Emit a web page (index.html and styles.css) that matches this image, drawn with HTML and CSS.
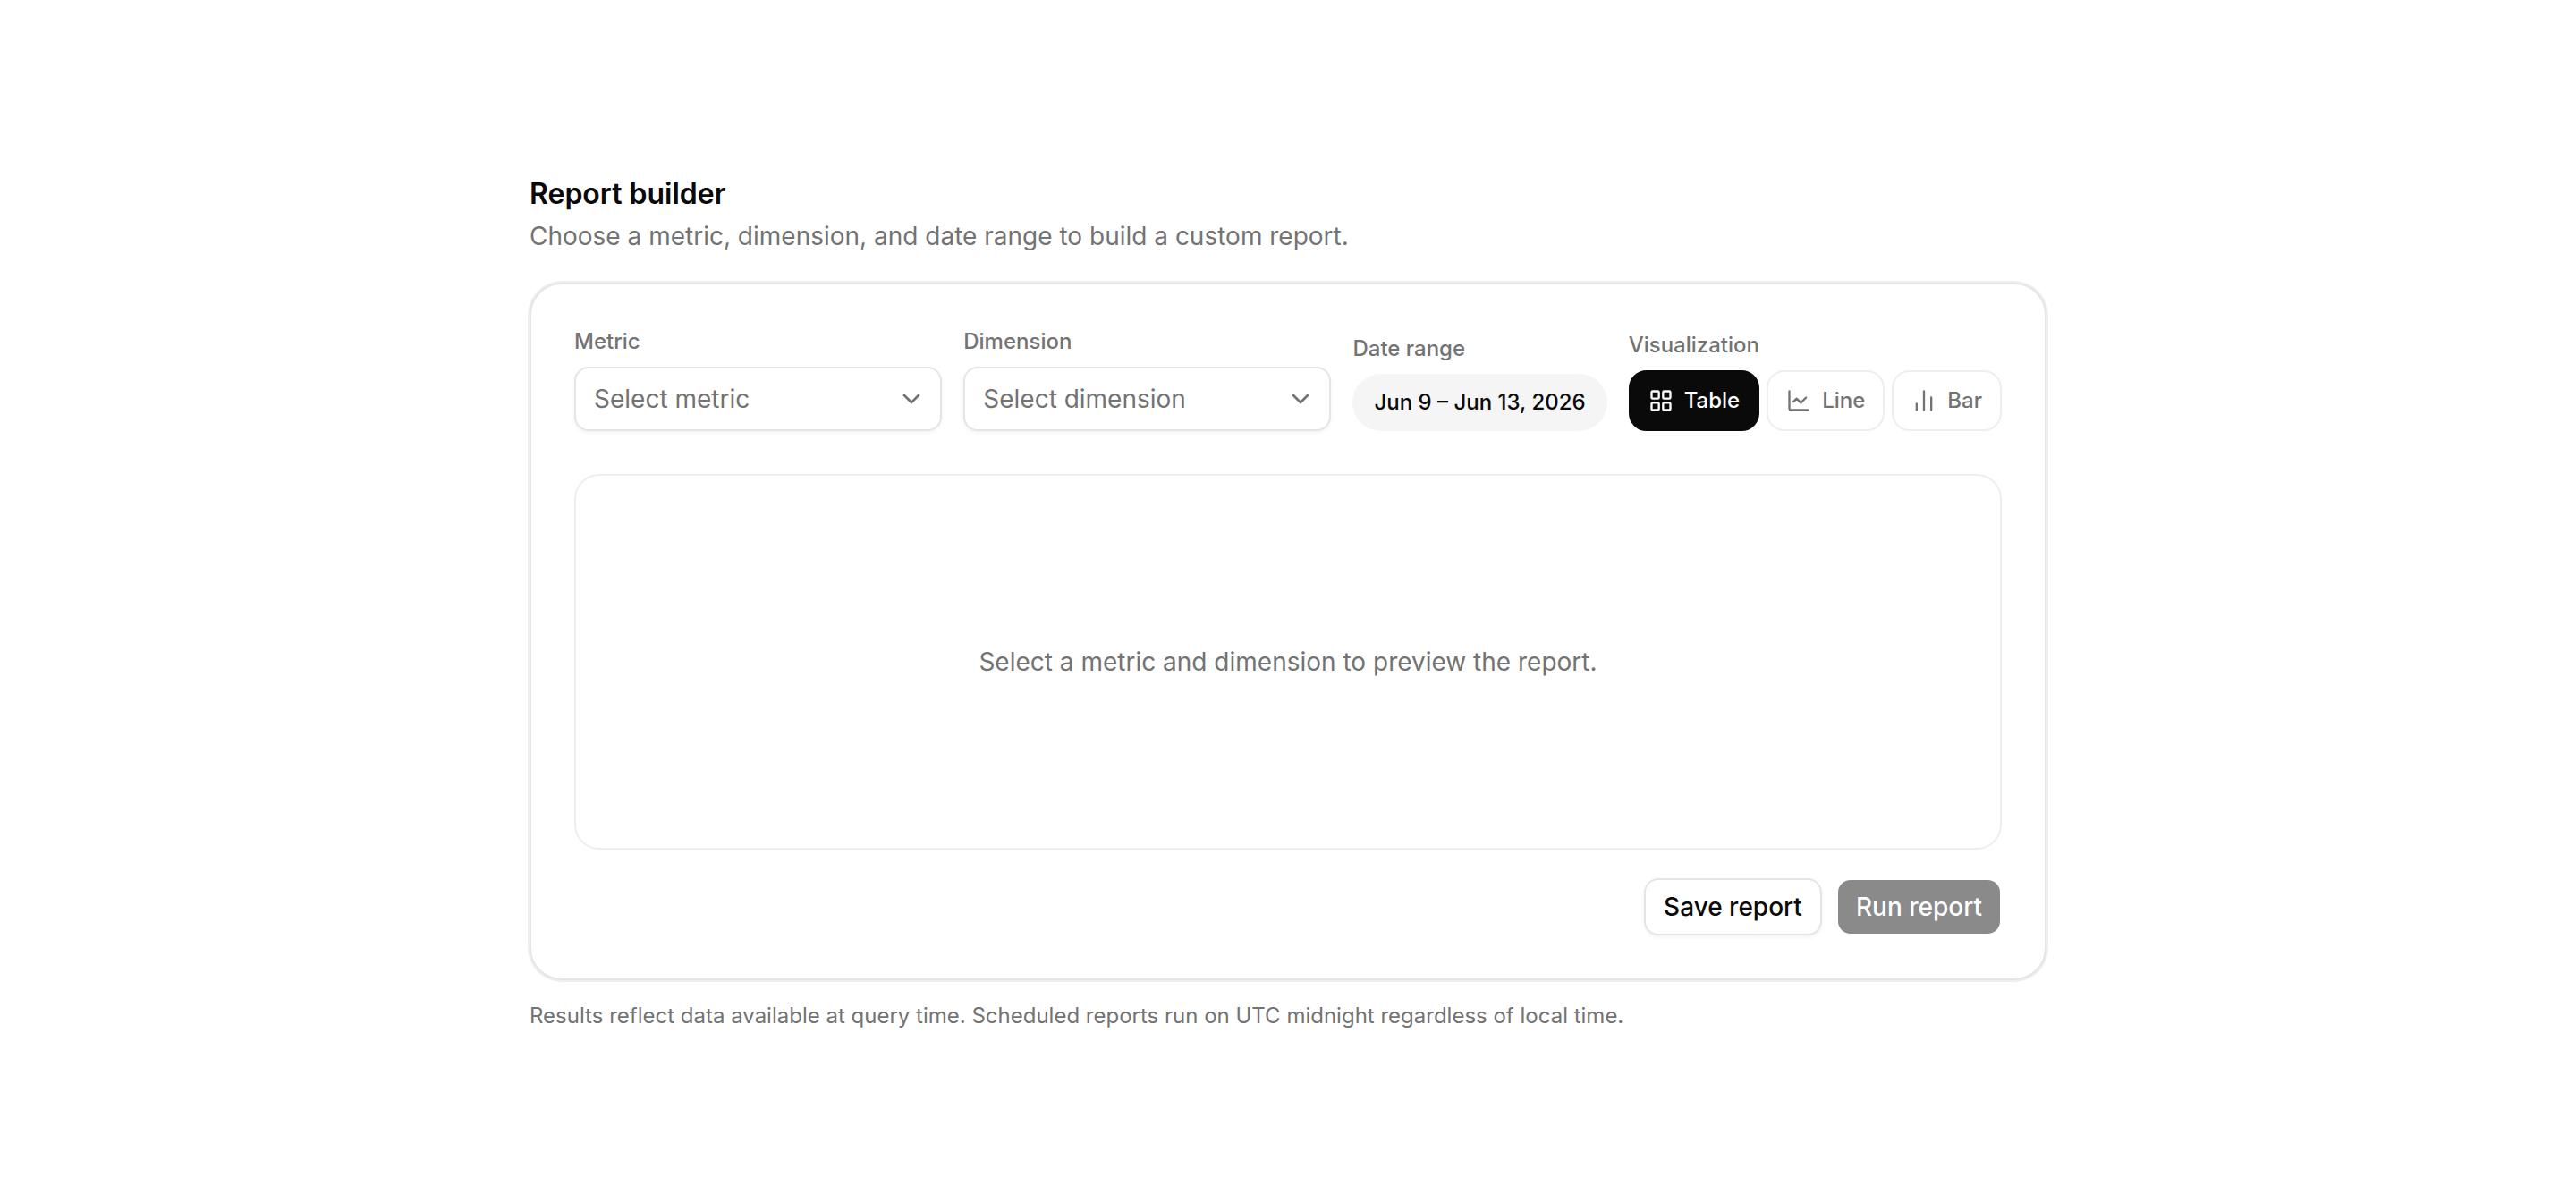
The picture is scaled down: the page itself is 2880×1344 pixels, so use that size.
FILE: index.html
```html
<!DOCTYPE html>
<html lang="en">

<head>
    <meta charset="UTF-8">
    <meta name="viewport" content="width=device-width, initial-scale=1.0">
    <title>Report builder</title>
    <link rel="stylesheet" href="styles.css">
</head>

<body>
    <main class="page">
        <header class="header">
            <h1 class="title">Report builder</h1>
            <p class="subtitle">Choose a metric, dimension, and date range to build a custom report.</p>
        </header>

        <form class="card">
            <div class="filters">
                <div class="field field-grow">
                    <label class="label" for="metric">Metric</label>
                    <div class="select-wrap">
                        <select class="select" id="metric">
                            <option value="">Select metric</option>
                        </select>
                        <svg class="chevron" viewBox="0 0 24 24" aria-hidden="true"><path d="m6 9 6 6 6-6"/></svg>
                    </div>
                </div>
                <div class="field field-grow">
                    <label class="label" for="dimension">Dimension</label>
                    <div class="select-wrap">
                        <select class="select" id="dimension">
                            <option value="">Select dimension</option>
                        </select>
                        <svg class="chevron" viewBox="0 0 24 24" aria-hidden="true"><path d="m6 9 6 6 6-6"/></svg>
                    </div>
                </div>
                <div class="field">
                    <label class="label" for="range">Date range</label>
                    <button class="date-btn" id="range" type="button">Jun 9 – Jun 13, 2026</button>
                </div>
                <div class="field">
                    <span class="label" id="viz-label">Visualization</span>
                    <div class="viz" role="group" aria-labelledby="viz-label">
                        <button class="viz-btn active" type="button" aria-pressed="true">
                            <svg class="icon" viewBox="0 0 24 24" aria-hidden="true">
                                <rect width="7" height="7" x="3" y="3" rx="1"/>
                                <rect width="7" height="7" x="14" y="3" rx="1"/>
                                <rect width="7" height="7" x="14" y="14" rx="1"/>
                                <rect width="7" height="7" x="3" y="14" rx="1"/>
                            </svg>
                            Table
                        </button>
                        <button class="viz-btn" type="button" aria-pressed="false">
                            <svg class="icon" viewBox="0 0 24 24" aria-hidden="true">
                                <path d="M3 3v16a2 2 0 0 0 2 2h16"/>
                                <path d="m19 9-5 5-4-4-3 3"/>
                            </svg>
                            Line
                        </button>
                        <button class="viz-btn" type="button" aria-pressed="false">
                            <svg class="icon" viewBox="0 0 24 24" aria-hidden="true">
                                <path d="M5 21v-6"/>
                                <path d="M12 21V3"/>
                                <path d="M19 21V9"/>
                            </svg>
                            Bar
                        </button>
                    </div>
                </div>
            </div>

            <div class="preview">
                <p>Select a metric and dimension to preview the report.</p>
            </div>

            <div class="actions">
                <button class="btn btn-outline" type="button">Save report</button>
                <button class="btn btn-primary" type="submit" disabled>Run report</button>
            </div>
        </form>

        <p class="footnote">Results reflect data available at query time. Scheduled reports run on UTC midnight regardless of local time.</p>
    </main>
</body>

</html>
```

FILE: styles.css
```css
* {
    box-sizing: border-box;
}

body {
    margin: 0;
    min-height: 100vh;
    display: flex;
    align-items: center;
    justify-content: center;
    background: #fff;
    color: #0a0a0a;
    font-family: Inter, "Liberation Sans", sans-serif;
    font-size: 28px;
    line-height: 40px;
    font-optical-sizing: none;
}

h1, p {
    margin: 0;
}

button, select {
    margin: 0;
    font: inherit;
    font-optical-sizing: none;
    color: inherit;
    cursor: pointer;
}

svg {
    fill: none;
    stroke: currentColor;
    stroke-width: 2;
    stroke-linecap: round;
    stroke-linejoin: round;
}

.page {
    width: 100%;
    max-width: 1792px;
    padding: 48px;
}

.header {
    display: flex;
    flex-direction: column;
    gap: 2px;
    margin-bottom: 32px;
}

.title {
    font-size: 32px;
    line-height: 50px;
    font-weight: 600;
}

.subtitle {
    color: #737373;
}

.card {
    padding: 48px;
    border: 2px solid #e5e5e5;
    border-radius: 36px;
    box-shadow: 0 0 0 2px #eee;
}

/* filters row */
.filters {
    display: flex;
    align-items: flex-end;
    gap: 24px;
    margin-bottom: 48px;
}

.field {
    display: flex;
    flex-direction: column;
    gap: 12px;
}

.field-grow {
    flex: 1;
    min-width: 0;
}

.label {
    font-size: 24px;
    line-height: 32px;
    font-weight: 500;
    color: #737373;
}

.select-wrap {
    position: relative;
}

.select {
    display: block;
    width: 100%;
    height: 72px;
    padding: 0 60px 0 20px;
    border: 2px solid #e5e5e5;
    border-radius: 16px;
    background: #fff;
    color: #737373;
    appearance: none;
    box-shadow: 0 2px 4px rgba(0, 0, 0, 0.05);
}

.chevron {
    position: absolute;
    top: 20px;
    right: 18px;
    width: 32px;
    height: 32px;
    color: #737373;
    pointer-events: none;
}

.date-btn {
    height: 64px;
    padding: 0 24px;
    border: 0;
    border-radius: 32px;
    background: #f5f5f5;
    font-size: 24px;
    font-weight: 500;
    white-space: nowrap;
}

.viz {
    display: flex;
    gap: 8px;
}

.viz-btn {
    display: flex;
    align-items: center;
    gap: 12px;
    height: 68px;
    padding: 0 20px;
    border: 2px solid #eee;
    border-radius: 20px;
    background: #fff;
    color: #737373;
    font-size: 24px;
    line-height: 32px;
    font-weight: 500;
}

.viz-btn.active {
    border-color: #0a0a0a;
    background: #0a0a0a;
    color: #fff;
}

.icon {
    width: 28px;
    height: 28px;
}

.preview {
    display: flex;
    align-items: center;
    justify-content: center;
    min-height: 420px;
    margin-bottom: 32px;
    border: 2px solid #eee;
    border-radius: 28px;
    color: #737373;
}

.actions {
    display: flex;
    justify-content: flex-end;
    gap: 16px;
}

.btn {
    height: 64px;
    padding: 0 20px;
    border: 2px solid transparent;
    border-radius: 16px;
    font-weight: 500;
}

.btn-outline {
    border-color: #e5e5e5;
    background: #fff;
    box-shadow: 0 2px 4px rgba(0, 0, 0, 0.05);
}

.btn-primary {
    background: #171717;
    background-clip: padding-box;
    color: #fff;
}

.btn-primary:disabled {
    opacity: 0.5;
}

.footnote {
    margin-top: 24px;
    font-size: 24px;
    line-height: 32px;
    color: #737373;
}
```
